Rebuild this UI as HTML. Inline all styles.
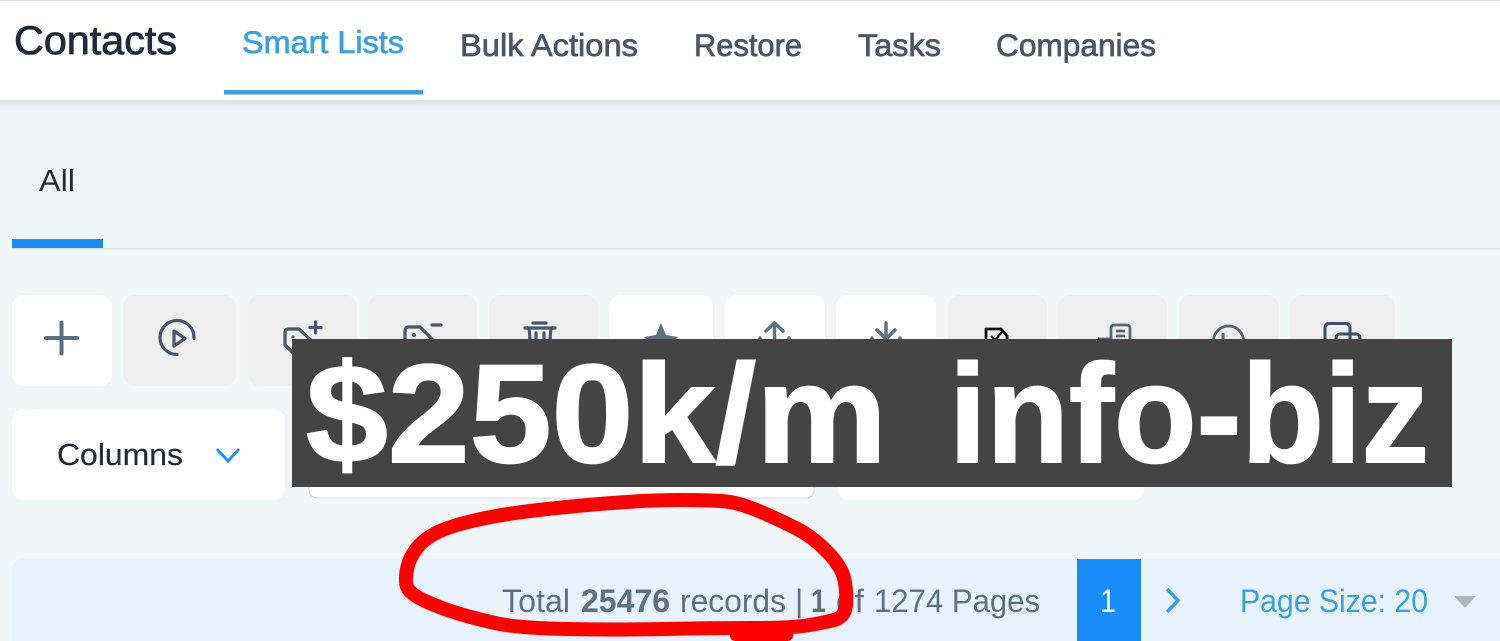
<!DOCTYPE html>
<html><head><meta charset="utf-8"><title>Contacts</title>
<style>
html,body{margin:0;padding:0;width:1500px;height:641px;overflow:hidden;background:#f1f6f9}
svg{display:block;position:absolute;left:0;top:0}
text{font-family:"Liberation Sans",sans-serif}
</style></head>
<body>
<svg width="1500" height="641" viewBox="0 0 1500 641" xmlns="http://www.w3.org/2000/svg">
<defs>
<linearGradient id="sh" x1="0" y1="0" x2="0" y2="1"><stop offset="0" stop-color="#dde2e6"/><stop offset="1" stop-color="#f1f6f9"/></linearGradient>
</defs>
<rect width="1500" height="641" fill="#f1f6f9"/>
<!-- header -->
<rect x="0" y="100" width="1500" height="12" fill="url(#sh)"/>
<rect x="0" y="0" width="1500" height="100" fill="#fff"/>
<rect x="0" y="0" width="1500" height="1" fill="#dcdcdc"/>
<text x="14" y="54" font-size="40" fill="#1f2a3a" stroke="#1f2a3a" stroke-width=".8" textLength="163" lengthAdjust="spacingAndGlyphs">Contacts</text>
<text x="242" y="53" font-size="31.500" fill="#3b9fe0" stroke="#3b9fe0" stroke-width=".7" textLength="162" lengthAdjust="spacingAndGlyphs">Smart Lists</text>
<rect x="224" y="90" width="199" height="4.5" fill="#38a0e0"/>
<g font-size="31.500" fill="#4a5565" stroke="#4a5565" stroke-width=".7">
<text x="460" y="56" textLength="178" lengthAdjust="spacingAndGlyphs">Bulk Actions</text>
<text x="694" y="56" textLength="108" lengthAdjust="spacingAndGlyphs">Restore</text>
<text x="858" y="56" textLength="83" lengthAdjust="spacingAndGlyphs">Tasks</text>
<text x="996" y="56" textLength="160" lengthAdjust="spacingAndGlyphs">Companies</text>
</g>
<!-- All tab -->
<text x="39" y="191" font-size="31" fill="#252b36" textLength="36" lengthAdjust="spacingAndGlyphs">All</text>
<rect x="12" y="248" width="1488" height="1.5" fill="#d9dee2"/>
<rect x="12" y="239" width="91" height="9" fill="#1a8cfa"/>
<!-- action buttons -->
<g fill="#fff">
<rect x="12" y="295" width="100" height="91" rx="12"/>
<rect x="609" y="295" width="104" height="91" rx="12"/>
<rect x="725" y="295" width="100" height="91" rx="12"/>
<rect x="836" y="295" width="100" height="91" rx="12"/>
</g>
<g fill="#eeeeee">
<rect x="123" y="295" width="113" height="91" rx="12"/>
<rect x="248" y="295" width="109" height="91" rx="12"/>
<rect x="368" y="295" width="109" height="91" rx="12"/>
<rect x="489" y="295" width="109" height="91" rx="12"/>
<rect x="948" y="295" width="99" height="91" rx="12"/>
<rect x="1058" y="295" width="109" height="91" rx="12"/>
<rect x="1179" y="295" width="100" height="91" rx="12"/>
<rect x="1290" y="295" width="105" height="91" rx="12"/>
</g>
<!-- icons -->
<path d="M46 338H77M61.500 322.500V353.500" fill="none" stroke="#5b6f7d" stroke-width="4" stroke-linecap="round"/>
<g fill="none" stroke="#47566a" stroke-width="3.2" stroke-linecap="round" stroke-linejoin="round">
<path d="M177 320.500A17 17 0 0 1 194 338.500M177 354.500A17 17 0 0 1 177 320.500"/>
<path d="M174 331L174 346L185 338.500Z"/>
<path d="M285 345V333Q285 329 289 329H299L315 344L300 356H296L285 345Z"/>
<path d="M315.500 322V333M310 327.500H321"/>
<path d="M405 345V331Q405 327 409 327H420L434 341"/>
<path d="M432 325H441"/>
<path d="M525 328H555M533 323H546M529 328L531 350H549L551 328M536 333V343M544 333V343"/>
</g>
<circle cx="293" cy="337" r="1.500" fill="#47566a"/>
<circle cx="414" cy="335" r="2" fill="#47566a"/>
<path d="M661 323L666 335L678 337L670 345H652L644 337L656 335Z" fill="#5c6f7c"/>
<g fill="none" stroke="#5c7383" stroke-width="3.500" stroke-linecap="round" stroke-linejoin="round">
<path d="M774.500 323V350M766 331L774.500 323L783 331"/>
<path d="M760 338V350H789V338"/>
<path d="M886 323V339M877 330L886 339L895 330"/>
<path d="M872 338V350H900V338"/>
</g>
<path d="M986 345V329H1001L1007 336V348" fill="none" stroke="#111" stroke-width="2.800"/>
<path d="M991 336L995 340L1002 332" fill="none" stroke="#111" stroke-width="2.200"/>
<g fill="none" stroke="#5a6470" stroke-width="2.800">
<rect x="1111" y="325" width="19" height="24" rx="3"/>
<path d="M1116 331H1125M1116 336H1125"/>
<path d="M1098 339H1111"/>
<circle cx="1228.500" cy="341" r="15"/>
</g>
<path d="M1223 333V345" stroke="#5a6470" stroke-width="3"/>
<g fill="none" stroke="#3c4d68" stroke-width="3">
<rect x="1325" y="323.500" width="25" height="25" rx="4"/>
<rect x="1336" y="334" width="24" height="20" rx="4"/>
</g>
<!-- filter row -->
<rect x="12" y="409" width="273" height="91" rx="12" fill="#fff"/>
<text x="57" y="465" font-size="31" fill="#1f2a3a" stroke="#1f2a3a" stroke-width=".2" textLength="126" lengthAdjust="spacingAndGlyphs">Columns</text>
<path d="M217 449L228 461L239 449" fill="none" stroke="#1a8cfa" stroke-width="2.800"/>
<rect x="309" y="440" width="505" height="58" rx="8" fill="#fff" stroke="#d3d9df" stroke-width="1"/>
<rect x="838" y="440" width="306" height="60" rx="10" fill="#fff"/>
<!-- pagination -->
<path d="M12 641V571Q12 559 24 559H1500V641Z" fill="#e7f2fc"/>
<g font-size="32" fill="#607080">
<text x="502" y="612" textLength="68" lengthAdjust="spacingAndGlyphs">Total</text>
<text x="581" y="612" font-weight="bold" textLength="89" lengthAdjust="spacingAndGlyphs">25476</text>
<text x="680" y="612" textLength="106" lengthAdjust="spacingAndGlyphs">records</text>
<text x="795" y="612">|</text>
<text x="811" y="612" font-weight="bold" textLength="15" lengthAdjust="spacingAndGlyphs">1</text>
<text x="836" y="612" textLength="28" lengthAdjust="spacingAndGlyphs">of</text>
<text x="874" y="612" textLength="166" lengthAdjust="spacingAndGlyphs">1274 Pages</text>
</g>
<rect x="1077" y="559" width="64" height="82" fill="#1a8cfa"/>
<text x="1100" y="612" font-size="32" fill="#fff" textLength="16" lengthAdjust="spacingAndGlyphs">1</text>
<path d="M1167 589L1178 600.500L1167 612" fill="none" stroke="#3b9fe0" stroke-width="3.500"/>
<text x="1240" y="612" font-size="32" fill="#3b9fe0" textLength="188" lengthAdjust="spacingAndGlyphs">Page Size: 20</text>
<path d="M1454 596H1476L1465 608Z" fill="#aeb5bd"/>
<!-- banner -->
<rect x="292" y="339" width="1160" height="148" fill="#444444"/>
<g font-size="140" font-weight="bold" fill="#fff" stroke="#fff" stroke-width="2">
<text x="306" y="462" textLength="581" lengthAdjust="spacingAndGlyphs">$250k/m</text>
<text x="949" y="462" textLength="480" lengthAdjust="spacingAndGlyphs">info-biz</text>
</g>
<!-- red scribble -->
<path d="M406.500 585Q408 593 424 600.500Q440 608 460 614Q480 620 500 624Q520 628 566.500 629Q613 630 663 629Q713 628 751.500 628Q790 628 806.500 625.500Q823 623 834 620Q845 617 846 605Q847 593 844.500 580Q842 567 827.500 552Q813 537 796.500 528.500Q780 520 760 511.500Q740 503 726.500 501.500Q713 500 680 500Q647 500 605 503.500Q563 507 530 511Q497 515 472 521Q447 527 435 533.500Q423 540 416.500 548.500Q410 557 407.500 567Q405 577 406.500 585Z" fill="none" stroke="#ff0000" stroke-width="14" stroke-linejoin="round"/>
<rect x="730" y="622" width="63" height="19" rx="5" fill="#ff0000"/>
</svg>
</body></html>
